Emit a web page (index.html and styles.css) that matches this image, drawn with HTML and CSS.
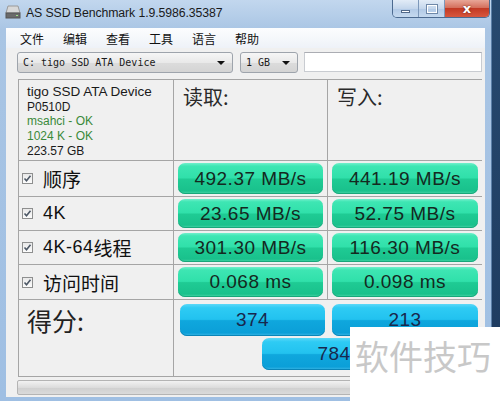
FILE: index.html
```html
<!DOCTYPE html>
<html>
<head>
	<title>AS SSD Benchmark</title>
	<meta charset="utf-8" />
	<link rel="stylesheet" href="styles.css">
</head>
<body>
	<div class="window">
		<div class="titlebar">
			<svg class="appicon" width="16" height="14" viewBox="0 0 16 14">
				<path d="M3 1 L13 1 L15 8 L1 8 Z" fill="#d8d8d8" stroke="#9a9a9a" stroke-width="1"/>
				<rect x="1" y="8" width="14" height="5" fill="#6b6b6b" stroke="#555" stroke-width="1"/>
				<rect x="11" y="10" width="2" height="1" fill="#9fe08a"/>
			</svg>
			<span class="title">AS SSD Benchmark 1.9.5986.35387</span>
			<div class="controls">
				<span class="ctl min"><i></i></span>
				<span class="ctl max"><i></i></span>
				<span class="ctl close">x</span>
			</div>
		</div>
		<div class="client">
			<div class="menubar">
				<span>文件</span>
				<span>编辑</span>
				<span>查看</span>
				<span>工具</span>
				<span>语言</span>
				<span>帮助</span>
			</div>
			<div class="toolbar">
				<div class="combo drive">C: tigo SSD ATA Device<b></b></div>
				<div class="combo size">1 GB<b></b></div>
				<div class="textbox"></div>
			</div>
			<div class="results">
				<div class="cell info">
					<p class="name">tigo SSD ATA Device</p>
					<p>P0510D</p>
					<p class="ok">msahci - OK</p>
					<p class="ok">1024 K - OK</p>
					<p>223.57 GB</p>
				</div>
				<div class="cell head">读取:</div>
				<div class="cell head">写入:</div>

				<div class="cell label"><span class="check"><svg width="9" height="9" viewBox="0 0 9 9"><path d="M1.5 4.5 L3.5 6.8 L7.5 1.8" fill="none" stroke="#4d5866" stroke-width="1.6"/></svg></span>顺序</div>
				<div class="cell val"><div class="bar">492.37 MB/s</div></div>
				<div class="cell val"><div class="bar">441.19 MB/s</div></div>

				<div class="cell label"><span class="check"><svg width="9" height="9" viewBox="0 0 9 9"><path d="M1.5 4.5 L3.5 6.8 L7.5 1.8" fill="none" stroke="#4d5866" stroke-width="1.6"/></svg></span><span class="lat">4K</span></div>
				<div class="cell val"><div class="bar">23.65 MB/s</div></div>
				<div class="cell val"><div class="bar">52.75 MB/s</div></div>

				<div class="cell label"><span class="check"><svg width="9" height="9" viewBox="0 0 9 9"><path d="M1.5 4.5 L3.5 6.8 L7.5 1.8" fill="none" stroke="#4d5866" stroke-width="1.6"/></svg></span><span class="lat">4K-64</span>线程</div>
				<div class="cell val"><div class="bar">301.30 MB/s</div></div>
				<div class="cell val"><div class="bar">116.30 MB/s</div></div>

				<div class="cell label"><span class="check"><svg width="9" height="9" viewBox="0 0 9 9"><path d="M1.5 4.5 L3.5 6.8 L7.5 1.8" fill="none" stroke="#4d5866" stroke-width="1.6"/></svg></span>访问时间</div>
				<div class="cell val"><div class="bar">0.068 ms</div></div>
				<div class="cell val"><div class="bar">0.098 ms</div></div>

				<div class="cell score-label">得分:</div>
				<div class="cell score">
					<div class="score-row">
						<div class="bar blue">374</div>
						<div class="bar blue">213</div>
					</div>
					<div class="bar blue total">784</div>
				</div>
			</div>
			<div class="progress"></div>
		</div>
	</div>
	<div class="watermark">软件技巧</div>
</body>
</html>
```

FILE: styles.css
```css
/* general styles */
* { box-sizing: border-box; }
body { margin: 0; width: 500px; height: 401px; overflow: hidden; background: linear-gradient(#27496f, #1d3a5e); font-family: "Liberation Sans", "Noto Sans CJK SC", sans-serif; position: relative; }
p { margin: 0; }

/* window frame */
.window { width: 492px; height: 401px; background: linear-gradient(#c2d7ee, #a9c5e4 30px, #9fbfe3); border-right: 1px solid #5a7ea6; }
.titlebar { height: 28px; display: flex; align-items: flex-start; padding-left: 5px; }
.appicon { margin-top: 5px; }
.title { margin: 6px 0 0 5px; font-size: 12.3px; color: #1a1a1a; letter-spacing: -0.1px; }
.controls { margin-left: auto; margin-right: 1px; display: flex; height: 18px; border: 1px solid #4c6a90; border-top: none; border-radius: 0 0 5px 5px; overflow: hidden; }
.ctl { display: flex; align-items: center; justify-content: center; height: 17px; }
.ctl.min, .ctl.max { width: 26px; background: linear-gradient(#e2ecf7, #c4d6ec 50%, #b1c9e6 51%, #c5d9ef); border-right: 1px solid #7d98ba; }
.ctl.min i { width: 9px; height: 3px; background: #fff; border: 1px solid #51698a; margin-top: 5px; }
.ctl.max i { width: 10px; height: 8px; border: 1px solid #fff; box-shadow: 0 0 0 1px #6f88a8; }
.ctl.close { width: 44px; background: linear-gradient(#e8a697, #d4705d 45%, #c23a24 50%, #d8573e); color: #fff; font: bold 13px "DejaVu Sans", sans-serif; text-shadow: 0 0 2px #5b1a10; }

.client { margin: 0 6px; height: 369px; background: #f0f0f0; }

/* menu */
.menubar { height: 20px; display: flex; gap: 7px; padding-left: 8px; background: linear-gradient(#fcfdfe, #eef2f8); font: 12px "Noto Sans CJK SC", sans-serif; color: #111; align-items: center; }
.menubar span { padding: 0 6px; }

/* toolbar */
.toolbar { display: flex; margin: 4px 0 0 11px; height: 21px; }
.combo { position: relative; height: 21px; border: 1px solid #9ea4ac; border-radius: 3px; background: linear-gradient(#f6f6f6, #e9e9e9 50%, #dcdcdc 51%, #d4d4d4); font: 10px "DejaVu Sans Mono", monospace; color: #1a1a1a; padding: 4px 0 0 5px; }
.combo b { position: absolute; right: 7px; top: 8px; border: 4px solid transparent; border-top: 4px solid #111; border-bottom: none; }
.drive { width: 216px; }
.size { width: 58px; margin-left: 7px; }
.textbox { width: 178px; height: 20px; margin-left: 6px; border: 1px solid #c9ccd1; border-top-color: #abadb3; background: #fff; }

/* results grid */
.results { margin: 6px 0 0 12px; width: 464px; display: grid; grid-template-columns: 154px 153px 154px; grid-template-rows: 80px 35px 33px 33px 34px 76px; gap: 1px; background: #a5a5a5; border: 1px solid #a5a5a5; }
.cell { background: #f0f0f0; }
.info { padding: 5px 0 0 8px; font-size: 12px; line-height: 14.7px; color: #1a1a1a; }
.info .name { font-size: 13.5px; }
.info .ok { color: #3a8a3a; }
.head { padding: 2px 0 0 9px; font: 20px "Noto Sans CJK SC", sans-serif; color: #2a2a2a; }
.label { display: flex; align-items: center; padding-left: 3px; font: 19px "Noto Sans CJK SC", sans-serif; color: #111; }
.label .lat { font: 18px "Liberation Sans", sans-serif; letter-spacing: 0.5px; }
.check { width: 11px; height: 11px; border: 1px solid #8e8f8f; background: linear-gradient(#e9e9e9, #fcfcfc); margin-right: 10px; display: flex; align-items: center; justify-content: center; }
.val { padding: 2px 4px; }
.bar { height: 100%; border-radius: 7px; display: flex; align-items: center; justify-content: center; font-size: 19px; letter-spacing: 0.5px; color: #14291f; background: linear-gradient(#72f0cc, #3ee6b3 10%, #30e0aa 48%, #1fcb94 52%, #19c18c 90%, #4bd7a9); box-shadow: inset 0 -1px 0 #17a77a; }

/* score */
.score-label { padding: 2px 0 0 8px; font: 25px "Noto Sans CJK SC", sans-serif; color: #222; }
.score { grid-column: span 2; padding: 4px 0 0 6px; }
.score-row { display: flex; gap: 7px; }
.bar.blue { flex: none; height: 32px; width: 145px; color: #18284d; background: linear-gradient(#5bd8f8, #2ecbf4 12%, #22c2ef 48%, #0fa7dd 52%, #0b9fd8 90%, #3fb8e6); box-shadow: inset 0 -1px 0 #0a85b8; }
.score-row .bar.blue:last-child { width: 146px; }
.bar.total { margin: 2px 0 0 82px; width: 144px; }

.progress { margin: 3px 0 0 11px; width: 466px; height: 15px; border: 1px solid #b4b4b4; border-radius: 2px; background: linear-gradient(#f2f2f2, #dcdcdc 50%, #cfcfcf 51%, #dadada); }

/* overlay */
.watermark { position: absolute; left: 350px; top: 327px; width: 150px; height: 74px; background: #fff; padding: 9px 0 0 5px; font: 34px/40px "Noto Sans CJK SC", sans-serif; color: #c8c8c8; }
```
